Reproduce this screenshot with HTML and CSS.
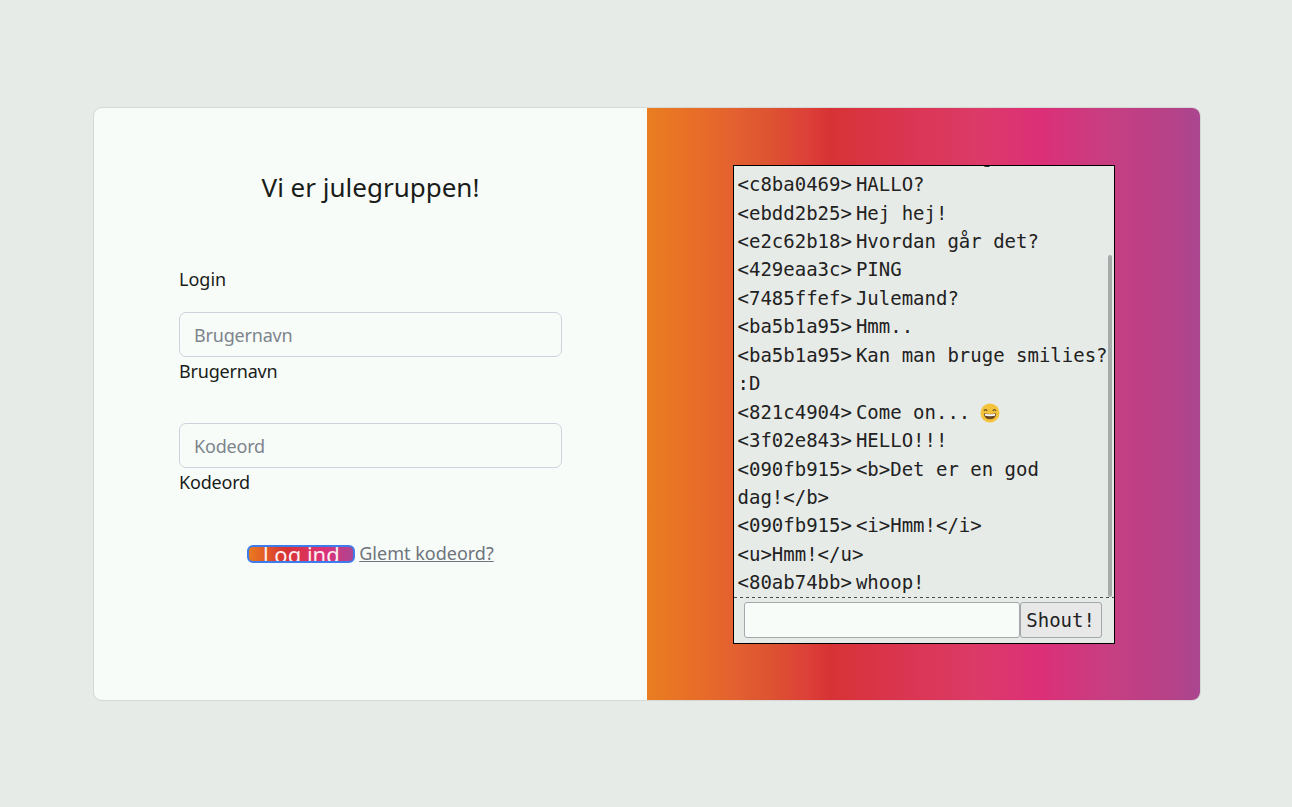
FILE: index.html
```html
<!DOCTYPE html>
<html lang="da">
  <head>
  <meta charset="utf-8">
  <title>Julegruppen</title>
  <link rel="stylesheet" href="styles.css">
  </head>
  <body>

<div class="card">

  <div class="login">
    <h1>Vi er julegruppen!</h1>
    <form class="login-form">
      <p class="login-head">Login</p>
      <input class="field" type="text" placeholder="Brugernavn">
      <label class="field-label">Brugernavn</label>
      <input class="field field-next" type="password" placeholder="Kodeord">
      <label class="field-label">Kodeord</label>
      <div class="actions">
        <button class="login-btn" type="button">Log ind</button>
        <a class="forgot" href="#">Glemt kodeord?</a>
      </div>
    </form>
  </div>

  <div class="side">
    <div class="shoutbox">
      <div class="log">
        <div class="line"><span class="nick">&lt;5d01f7a2&gt;</span>Hvad så, nogen?</div>
        <div class="line"><span class="nick">&lt;c8ba0469&gt;</span>HALLO?</div>
        <div class="line"><span class="nick">&lt;ebdd2b25&gt;</span>Hej hej!</div>
        <div class="line"><span class="nick">&lt;e2c62b18&gt;</span>Hvordan går det?</div>
        <div class="line"><span class="nick">&lt;429eaa3c&gt;</span>PING</div>
        <div class="line"><span class="nick">&lt;7485ffef&gt;</span>Julemand?</div>
        <div class="line"><span class="nick">&lt;ba5b1a95&gt;</span>Hmm..</div>
        <div class="line"><span class="nick">&lt;ba5b1a95&gt;</span>Kan man bruge smilies? :D</div>
        <div class="line"><span class="nick">&lt;821c4904&gt;</span>Come on... <svg class="smiley" viewBox="0 0 20 20"><circle cx="10" cy="10" r="9.5" fill="#f5c33b"/><path d="M4.2 7.6q1.4-2 2.8 0M13 7.6q1.4-2 2.8 0" fill="none" stroke="#6b5330" stroke-width="1.1" stroke-linecap="round"/><path d="M3.8 10.2q6.2 1.4 12.4 0q-.4 6-6.2 6t-6.2-6z" fill="#6b4a24"/><path d="M4.8 10.8q5.2 1 10.4 0l-.3 1.9q-4.9.9-9.8 0z" fill="#fff"/></svg></div>
        <div class="line"><span class="nick">&lt;3f02e843&gt;</span>HELLO!!!</div>
        <div class="line"><span class="nick">&lt;090fb915&gt;</span>&lt;b&gt;Det er en god <span class="nowrap">dag!&lt;/b&gt;</span></div>
        <div class="line"><span class="nick">&lt;090fb915&gt;</span><span class="nowrap">&lt;i&gt;Hmm!&lt;/i&gt;</span> <span class="nowrap">&lt;u&gt;Hmm!&lt;/u&gt;</span></div>
        <div class="line"><span class="nick">&lt;80ab74bb&gt;</span>whoop!</div>
      </div>
      <span class="thumb"></span>
      <form class="shout-form">
        <input class="shout-input" type="text">
        <button class="shout-btn" type="button">Shout!</button>
      </form>
    </div>
  </div>

</div>

  </body>
</html>
```

FILE: styles.css
```css
html, body {height:100%;}
body {margin:0; background-color:#e7ebe8; color:#1a1c1a; font:18px/27px "Noto Sans", sans-serif;}

.card {box-sizing:border-box; width:1108px; height:594px; margin:107px 0 0 93px; display:grid; grid-template-columns:553px 1fr; background-color:#f8fcf9; border:1px solid #d4d8d5; border-radius:9px; overflow:hidden;}

.login {padding-top:58px;}
.login h1 {margin:0; font-size:26px; line-height:42px; font-weight:400; text-align:center;}
.login-form {width:383px; margin:58px 0 0 85px;}
.login-head {margin:0 0 19px 0; font-size:18px; line-height:27px;}
.field {display:block; box-sizing:border-box; width:100%; height:45px; padding:0 14px; background-color:#f8fcf9; border:1px solid #ccd3dd; border-radius:7px; color:#1a1c1a; font:18px "Noto Sans", sans-serif; letter-spacing:-.2px;}
.field::placeholder {color:#7c848c; opacity:1;}
.field-next {margin-top:38px;}
.field-label {display:block; margin-top:1px; letter-spacing:-.2px;}

.actions {display:flex; align-items:center; justify-content:center; gap:4px; margin-top:44px;}
.login-btn {box-sizing:border-box; width:108px; height:18px; padding:0; overflow:hidden; background:linear-gradient(to right, #e97a1e, #d73333 35%, #dc3178 72%, #ae4490); border:2px solid #3f7bea; border-radius:6px; color:#fbeef0; font:22px/15px "Noto Sans", sans-serif;}
.forgot {color:#6d747b; text-decoration:underline;}

.side {display:flex; justify-content:center; padding-top:57px; background:linear-gradient(to right, #e97d20, #e86d28 9%, #e36030 16%, #dd5431 22%, #dd4038 29%, #d73335 33%, #da3550 46%, #dc3a68 60%, #dc2f78 71%, #c63f82 84%, #bd3f85 90%, #b54288 95%, #aa4690);}

.shoutbox {position:relative; box-sizing:border-box; width:382px; height:479px; background-color:#e7ebe8; border:1px solid #000; color:#222;}
.log {box-sizing:border-box; height:432px; padding:0 4px 1.3px 4px; display:flex; flex-direction:column; justify-content:flex-end; overflow:hidden; background:repeating-linear-gradient(to right, #4a4a4a 0 3px, transparent 3px 6px) left bottom / 100% 1px no-repeat; font:19px/28.43px "DejaVu Sans Mono", monospace;}
.line {flex:none;}
.nick {margin-right:4px;}
.nowrap {white-space:nowrap;}
.smiley {width:20px; height:20px; margin-left:-2px; vertical-align:-4px;}
.thumb {position:absolute; top:89px; left:374px; width:4px; height:342px; background-color:#a6abaa; border-radius:2px;}

.shout-form {display:flex; padding:4px 12px 0 10px;}
.shout-input {box-sizing:border-box; width:277px; height:36px; padding:0 4px; background-color:#f8fcf9; border:1px solid #a4a8ab; border-radius:3px;}
.shout-btn {box-sizing:border-box; width:82px; height:36px; padding:0; background-color:#e8e8e8; border:1px solid #a4a8ab; border-radius:3px; color:#222; font:19px "DejaVu Sans Mono", monospace;}
```
